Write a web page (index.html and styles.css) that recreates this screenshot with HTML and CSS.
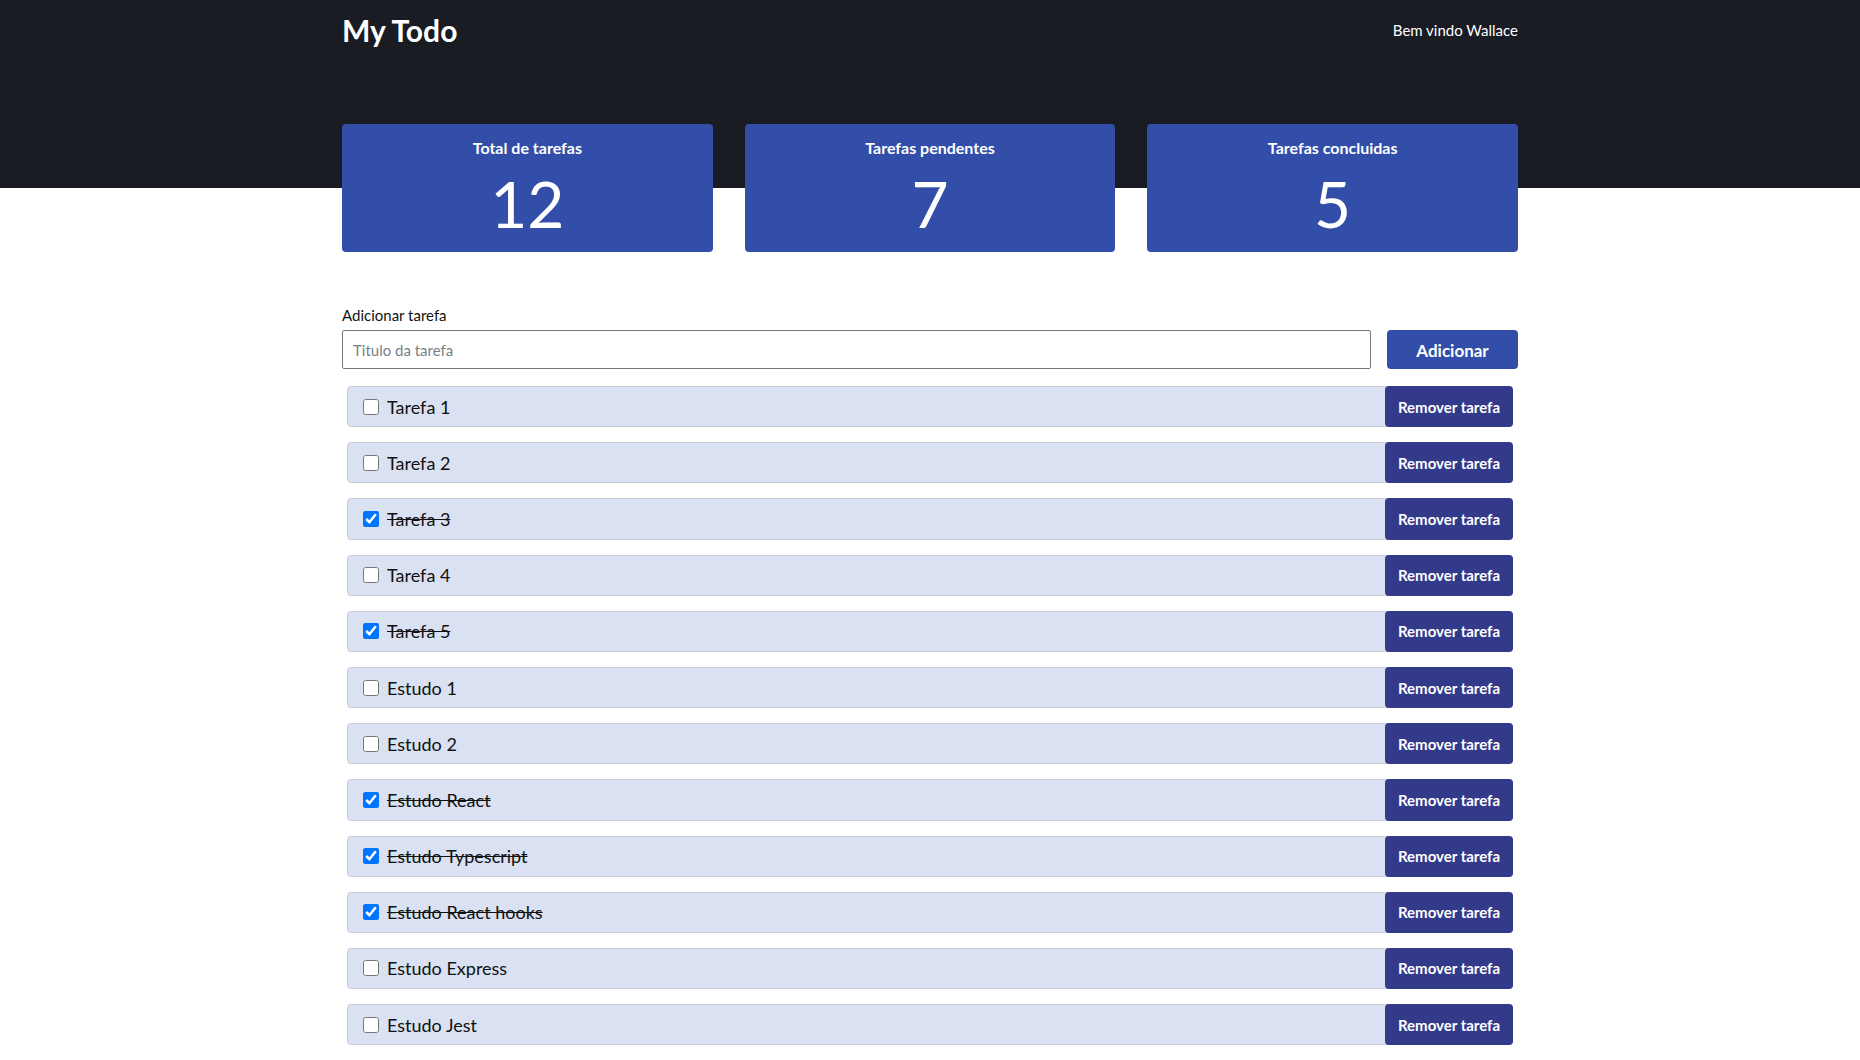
FILE: index.html
```html
<!DOCTYPE html>
<html lang="pt-BR">
<head>
<meta charset="utf-8">
<title>My Todo</title>
<link rel="stylesheet" href="styles.css">
</head>
<body>
<header class="topbar">
  <div class="container topbar-row">
    <h1 class="brand">My Todo</h1>
    <span class="welcome">Bem vindo Wallace</span>
  </div>
</header>
<main class="container">
  <section class="stats">
    <div class="stat-card"><h2 class="stat-title">Total de tarefas</h2><p class="stat-value">12</p></div>
    <div class="stat-card"><h2 class="stat-title">Tarefas pendentes</h2><p class="stat-value">7</p></div>
    <div class="stat-card"><h2 class="stat-title">Tarefas concluidas</h2><p class="stat-value">5</p></div>
  </section>
  <form class="add-form">
    <label class="add-label" for="title">Adicionar tarefa</label>
    <div class="add-row">
      <input id="title" class="add-input" type="text" placeholder="Titulo da tarefa">
      <button type="button" class="add-btn">Adicionar</button>
    </div>
  </form>
  <ul class="task-list">
    <li class="task"><label class="task-label"><input type="checkbox" class="task-check"><span class="task-name">Tarefa 1</span></label><button type="button" class="remove-btn">Remover tarefa</button></li>
    <li class="task"><label class="task-label"><input type="checkbox" class="task-check"><span class="task-name">Tarefa 2</span></label><button type="button" class="remove-btn">Remover tarefa</button></li>
    <li class="task done"><label class="task-label"><input type="checkbox" class="task-check" checked><span class="task-name">Tarefa 3</span></label><button type="button" class="remove-btn">Remover tarefa</button></li>
    <li class="task"><label class="task-label"><input type="checkbox" class="task-check"><span class="task-name">Tarefa 4</span></label><button type="button" class="remove-btn">Remover tarefa</button></li>
    <li class="task done"><label class="task-label"><input type="checkbox" class="task-check" checked><span class="task-name">Tarefa 5</span></label><button type="button" class="remove-btn">Remover tarefa</button></li>
    <li class="task"><label class="task-label"><input type="checkbox" class="task-check"><span class="task-name">Estudo 1</span></label><button type="button" class="remove-btn">Remover tarefa</button></li>
    <li class="task"><label class="task-label"><input type="checkbox" class="task-check"><span class="task-name">Estudo 2</span></label><button type="button" class="remove-btn">Remover tarefa</button></li>
    <li class="task done"><label class="task-label"><input type="checkbox" class="task-check" checked><span class="task-name">Estudo React</span></label><button type="button" class="remove-btn">Remover tarefa</button></li>
    <li class="task done"><label class="task-label"><input type="checkbox" class="task-check" checked><span class="task-name">Estudo Typescript</span></label><button type="button" class="remove-btn">Remover tarefa</button></li>
    <li class="task done"><label class="task-label"><input type="checkbox" class="task-check" checked><span class="task-name">Estudo React hooks</span></label><button type="button" class="remove-btn">Remover tarefa</button></li>
    <li class="task"><label class="task-label"><input type="checkbox" class="task-check"><span class="task-name">Estudo Express</span></label><button type="button" class="remove-btn">Remover tarefa</button></li>
    <li class="task"><label class="task-label"><input type="checkbox" class="task-check"><span class="task-name">Estudo Jest</span></label><button type="button" class="remove-btn">Remover tarefa</button></li>
  </ul>
</main>
</body>
</html>
```
FILE: styles.css
```css
* { box-sizing: border-box; }
body {
  margin: 0;
  background: #ffffff;
  color: #111111;
  font-family: "Lato", "Noto Sans", sans-serif;
}
.container {
  width: 1176px;
  margin: 0 auto;
}
.topbar {
  background: #191c23;
  height: 188px;
}
.topbar-row {
  display: flex;
  justify-content: space-between;
  align-items: center;
  height: 59px;
}
.brand {
  margin: 0;
  color: #ffffff;
  font-size: 30px;
  font-weight: 700;
}
.welcome {
  color: #ffffff;
  font-size: 15px;
}
.stats {
  display: grid;
  grid-template-columns: repeat(3, 1fr);
  gap: 32px;
  margin-top: -64px;
}
.stat-card {
  background: #324ea8;
  color: #ffffff;
  border-radius: 4px;
  height: 128px;
  padding-top: 14px;
  text-align: center;
}
.stat-title {
  margin: 0;
  font-size: 16px;
  line-height: 20px;
  font-weight: 700;
}
.stat-value {
  margin: 10px 0 0;
  font-size: 64px;
  line-height: 72px;
  font-weight: 400;
}
.add-form {
  margin-top: 54px;
}
.add-label {
  display: block;
  font-size: 15px;
  line-height: 18px;
  margin-bottom: 6px;
}
.add-row {
  display: flex;
  gap: 16px;
}
.add-input {
  flex: 1;
  height: 39px;
  border: 1px solid #777777;
  border-radius: 2px;
  padding: 0 10px;
  font-family: inherit;
  font-size: 15px;
}
.add-input::placeholder { color: #7a7f88; }
.add-btn {
  width: 131px;
  height: 39px;
  border: none;
  border-radius: 4px;
  background: #324ea8;
  color: #ffffff;
  font-family: inherit;
  font-size: 17px;
  font-weight: 700;
  padding-top: 2px;
}
.task-list {
  list-style: none;
  margin: 17px 5px 0;
  padding: 0;
  display: flex;
  flex-direction: column;
  gap: 15px;
}
.task {
  display: flex;
  align-items: stretch;
  height: 41.2px;
  background: #dae1f3;
  border: 1px solid #c9cdd6;
  border-radius: 4px;
}
.task-label {
  flex: 1;
  display: flex;
  align-items: center;
  gap: 8px;
  padding-left: 15px;
  font-size: 18px;
}
.task-check {
  width: 16px;
  height: 16px;
  margin: 0;
}
.done .task-name { text-decoration: line-through; }
.remove-btn {
  width: 128px;
  margin: -1px -1px -1px 0;
  border: none;
  border-radius: 4px;
  background: #333a8a;
  color: #ffffff;
  font-family: inherit;
  font-size: 15px;
  font-weight: 700;
}
```
